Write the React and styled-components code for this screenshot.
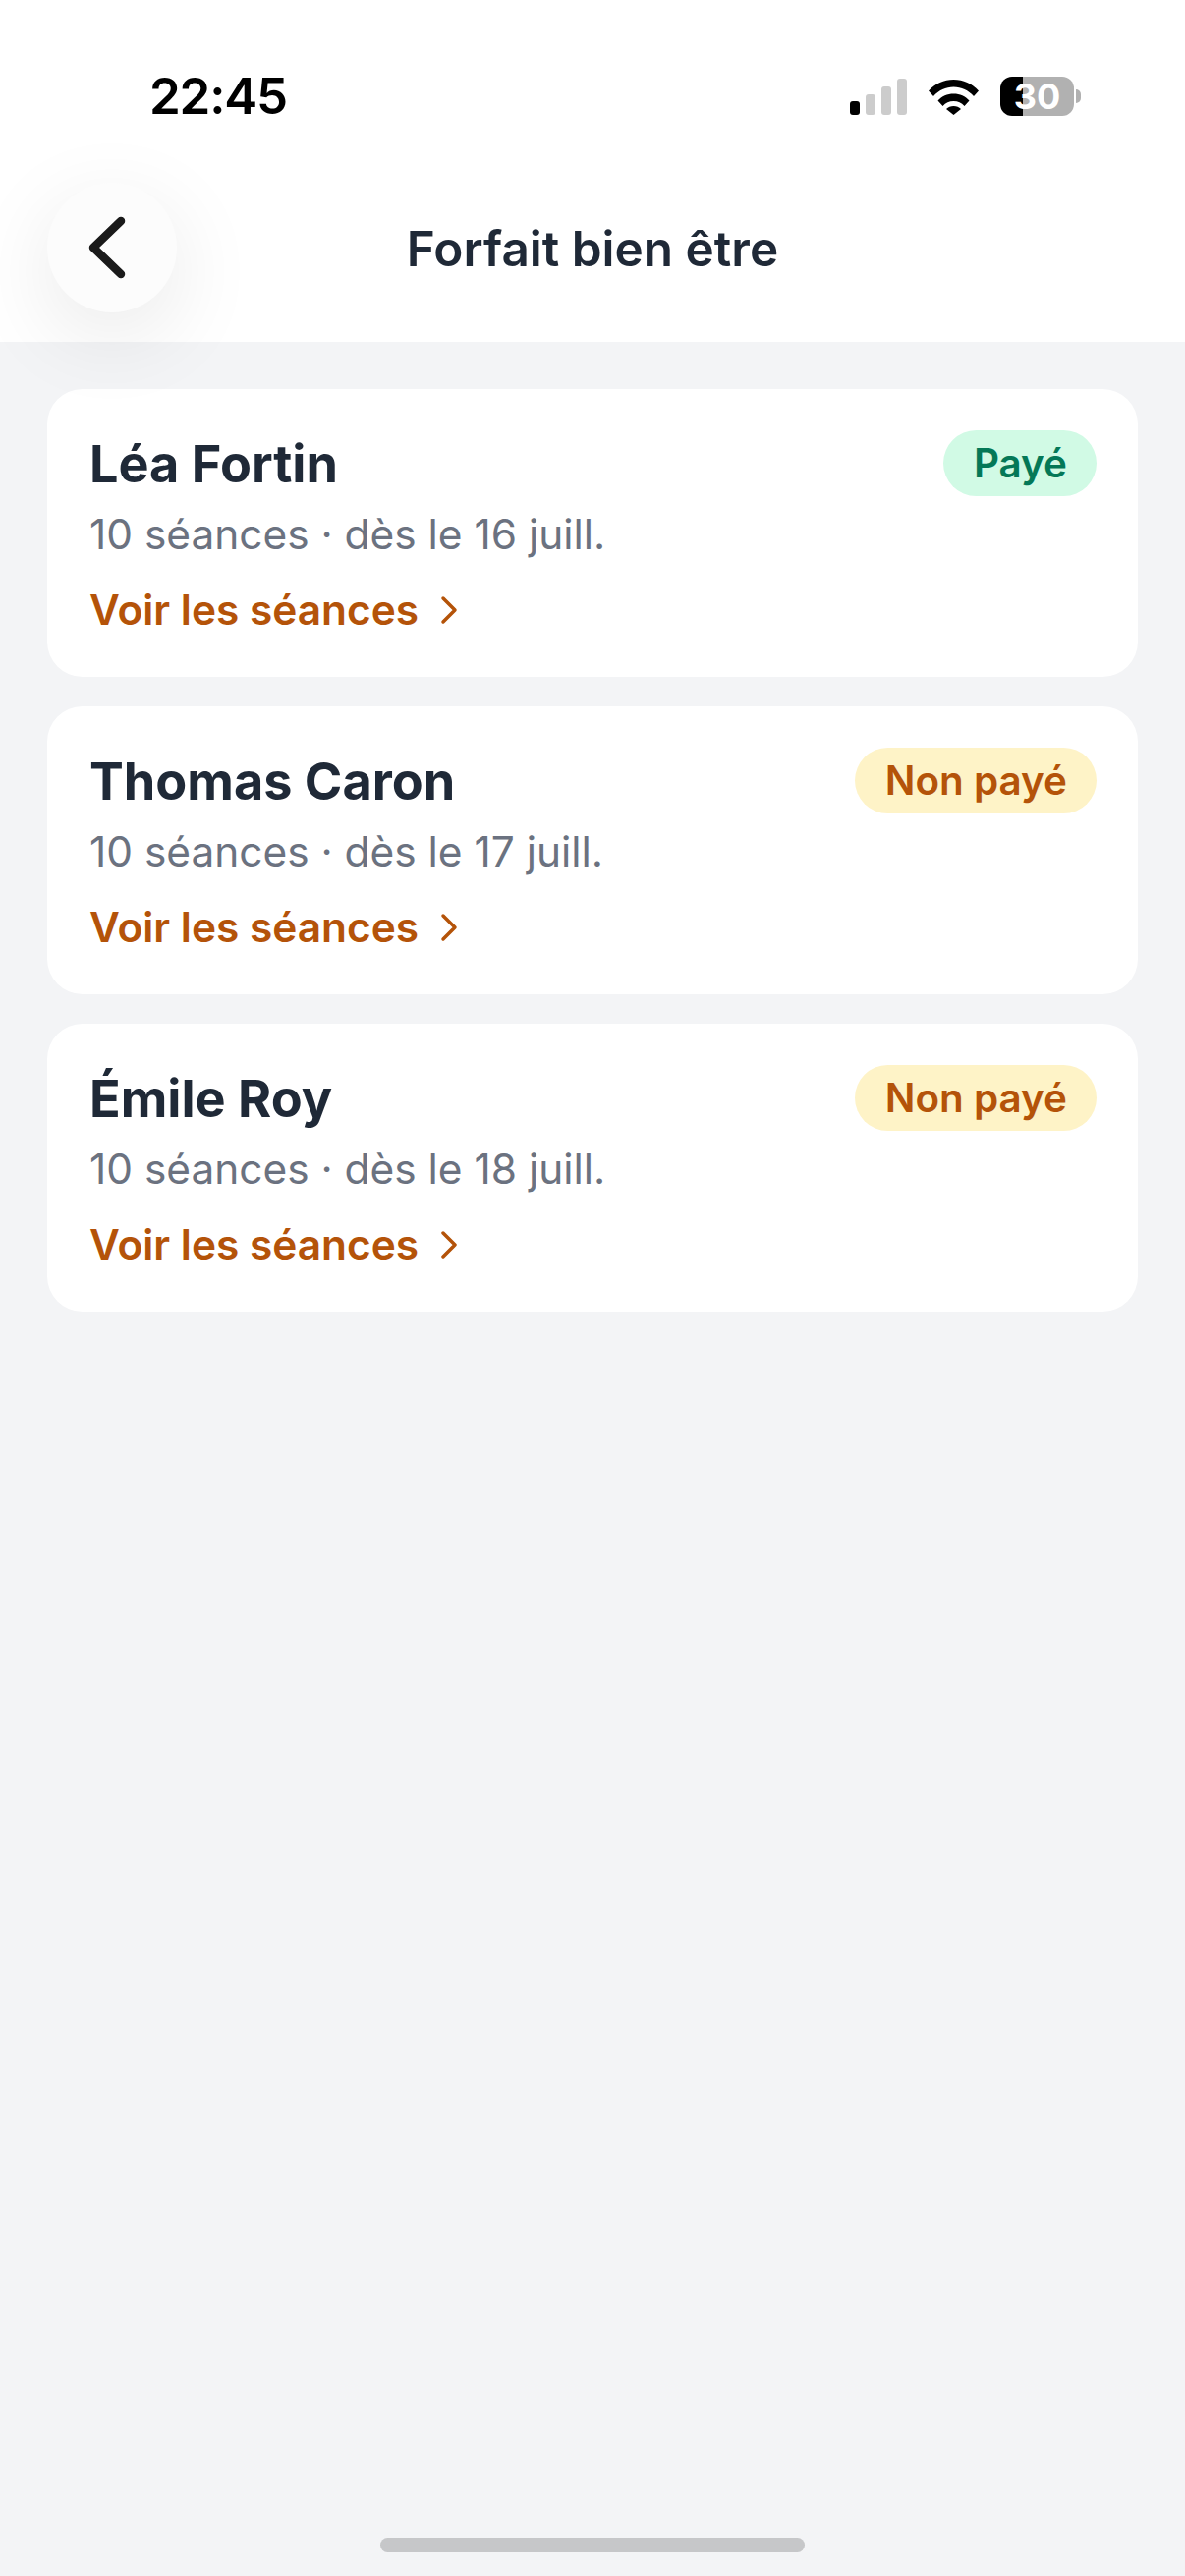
import React from "react";
import styled, { createGlobalStyle } from "styled-components";

const Global = createGlobalStyle`
  html, body { margin: 0; padding: 0; background: #f3f4f6; }
  body { font-family: Inter, "Noto Sans", sans-serif; -webkit-font-smoothing: antialiased; }
`;

const Screen = styled.div`
  width: 1206px;
  height: 2622px;
  display: flex;
  flex-direction: column;
  background: #f3f4f6;
  overflow: hidden;
`;

const Header = styled.header`
  height: 348px;
  flex: none;
  background: #fff;
  display: flex;
  flex-direction: column;
`;

const StatusBar = styled.div`
  height: 186px;
  flex: none;
  display: flex;
  align-items: flex-start;
  justify-content: space-between;
  padding: 67px 113px 0 152px;
  box-sizing: border-box;
`;

const Clock = styled.span`
  font-size: 51px;
  line-height: 62px;
  font-weight: 600;
  letter-spacing: -1.2px;
  color: #000;
`;

const StatusIcons = styled.div`
  display: flex;
  align-items: center;
  gap: 22px;
  margin-top: 11px;
`;

const Signal = styled.div`
  display: flex;
  align-items: flex-end;
  gap: 6px;
  height: 37px;
`;

const SignalBar = styled.i`
  display: block;
  width: 10px;
  height: ${(p) => p.$h}px;
  border-radius: 3px;
  background: ${(p) => (p.$on ? "#000" : "#cccccc")};
`;

const Battery = styled.div`
  position: relative;
  width: 75px;
  height: 40px;
  border-radius: 12px;
  background: linear-gradient(90deg, #000 0 23px, #b1b1b1 23px);
  display: flex;
  align-items: center;
  justify-content: center;
  color: #fff;
  font-size: 36px;
  font-weight: 700;
  line-height: 1;
  &::after {
    content: "";
    position: absolute;
    right: -7px;
    top: 13px;
    width: 5px;
    height: 14px;
    border-radius: 0 7px 7px 0;
    background: #b1b1b1;
  }
`;

const Nav = styled.div`
  flex: 1;
  display: grid;
  grid-template-columns: 132px 1fr 132px;
  padding: 0 48px;
  align-items: start;
`;

const BackButton = styled.button`
  width: 132px;
  height: 132px;
  border: 0;
  padding: 0;
  border-radius: 50%;
  background: #fcfcfc;
  box-shadow: 0 24px 90px rgba(0, 0, 0, 0.09);
  display: flex;
  align-items: center;
  justify-content: center;
  position: relative;
  z-index: 2;
`;

const Title = styled.h1`
  margin: 0;
  text-align: center;
  font-size: 49.5px;
  line-height: 135px;
  font-weight: 600;
  color: #1f2937;
`;

const List = styled.main`
  display: flex;
  flex-direction: column;
  gap: 30px;
  padding: 48px 48px 0;
`;

const Card = styled.article`
  height: 293px;
  box-sizing: border-box;
  background: #fff;
  border-radius: 36px;
  padding: 42px 42px 42px 43px;
  display: grid;
  grid-template-columns: 1fr auto;
  align-items: start;
`;

const Info = styled.div`
  display: flex;
  flex-direction: column;
`;

const Name = styled.div`
  font-size: 52.2px;
  line-height: 68px;
  font-weight: 700;
  color: #1f2937;
`;

const Meta = styled.div`
  font-size: 42.4px;
  line-height: 60px;
  font-weight: 400;
  color: #6b7280;
  margin-top: 8px;
`;

const Link = styled.a`
  display: flex;
  align-items: center;
  gap: 20px;
  margin-top: 17px;
  font-size: 42.4px;
  line-height: 60px;
  font-weight: 600;
  color: #b45309;
`;

const Badge = styled.span`
  height: 67px;
  box-sizing: border-box;
  padding: 0 30px 0 31px;
  border-radius: 34px;
  display: flex;
  align-items: center;
  font-size: 40.4px;
  font-weight: 600;
  color: ${(p) => (p.$paid ? "#047857" : "#b45309")};
  background: ${(p) => (p.$paid ? "#d1fae5" : "#fef3c7")};
`;

const HomeBar = styled.div`
  margin: auto auto 24px;
  width: 432px;
  height: 15px;
  border-radius: 8px;
  background: #c6c7c9;
`;

const rows = [
  { name: "Léa Fortin", meta: "10 séances · dès le 16 juill.", paid: true },
  { name: "Thomas Caron", meta: "10 séances · dès le 17 juill.", paid: false },
  { name: "Émile Roy", meta: "10 séances · dès le 18 juill.", paid: false },
];

export default function App() {
  return (
    <Screen>
      <Global />
      <Header>
        <StatusBar>
          <Clock>22:45</Clock>
          <StatusIcons>
            <Signal>
              <SignalBar $h={14} $on />
              <SignalBar $h={21} />
              <SignalBar $h={29} />
              <SignalBar $h={37} />
            </Signal>
            <svg width="51" height="37" viewBox="0 0 51 37" aria-hidden="true">
              <path d="M0 12.5C7 5 15.5 1 25.5 1S44 5 51 12.5L46 18C40.5 12 33.5 8.5 25.5 8.5S10.5 12 5 18Z" fill="#000" />
              <path d="M9.5 22.5C13.5 18 19 15.5 25.5 15.5S37.5 18 41.5 22.5L36.5 28C33.5 24.8 30 23 25.5 23S17.5 24.8 14.5 28Z" fill="#000" />
              <path d="M18 31C20 29 22.5 28 25.5 28S31 29 33 31L25.5 37Z" fill="#000" />
            </svg>
            <Battery>30</Battery>
          </StatusIcons>
        </StatusBar>
        <Nav>
          <BackButton aria-label="Retour">
            <svg width="66" height="66" viewBox="0 0 66 66" fill="none" aria-hidden="true">
              <path d="M42 6 L14 33 L42 60" stroke="#1a1a1a" strokeWidth="8.5" strokeLinecap="round" strokeLinejoin="round" />
            </svg>
          </BackButton>
          <Title>Forfait bien être</Title>
        </Nav>
      </Header>
      <List>
        {rows.map((r) => (
          <Card key={r.name}>
            <Info>
              <Name>{r.name}</Name>
              <Meta>{r.meta}</Meta>
              <Link>
                Voir les séances
                <svg width="22" height="30" viewBox="0 0 22 30" fill="none" aria-hidden="true">
                  <path d="M5 3 L17 15 L5 27" stroke="#b45309" strokeWidth="3.5" strokeLinecap="round" strokeLinejoin="round" />
                </svg>
              </Link>
            </Info>
            <Badge $paid={r.paid}>{r.paid ? "Payé" : "Non payé"}</Badge>
          </Card>
        ))}
      </List>
      <HomeBar />
    </Screen>
  );
}
